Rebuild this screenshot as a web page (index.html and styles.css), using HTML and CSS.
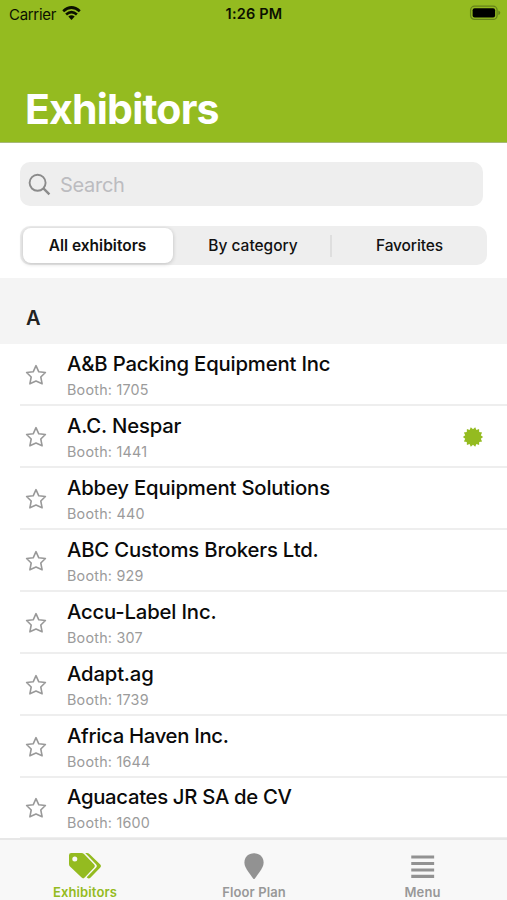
FILE: index.html
```html
<!DOCTYPE html>
<html lang="en">
<head>
<meta charset="utf-8">
<title>Exhibitors</title>
<link rel="stylesheet" href="styles.css">
</head>
<body>
<svg class="defs" width="0" height="0" aria-hidden="true">
  <symbol id="star" viewBox="0 0 22 22"><path d="M11 1.7 13.8 7.8 20.4 8.5 15.8 13 17.1 19.8 11 17.1 4.9 19.8 6.2 13 1.6 8.5 8.2 7.8Z" fill="none" stroke="#999" stroke-width="1.6" stroke-linejoin="round"/></symbol>
</svg>
<div class="app">
  <header class="header">
    <div class="status">
      <div class="carrier"><span>Carrier</span>
        <svg width="19" height="15" viewBox="0 0 19 15"><g fill="none" stroke="#0b1000" stroke-width="2.7"><path d="M1.2 5.2Q9.5-2.2 17.8 5.2"/><path d="M4.1 8.4Q9.5 3.7 14.9 8.4"/></g><path d="M6.3 10.5Q9.5 7.9 12.7 10.5L9.5 14Z" fill="#0b1000"/></svg>
      </div>
      <div class="time">1:26 PM</div>
      <svg class="battery" width="32" height="16" viewBox="0 0 32 16"><rect x="1.6" y="1.2" width="26.5" height="13.2" rx="4" fill="none" stroke="#65821a" stroke-width="1.3"/><rect x="3.6" y="3.2" width="22.5" height="9.2" rx="2" fill="#000"/><path d="M29.3 5.5Q31.3 6.2 31.3 7.8T29.3 10.1Z" fill="#65821a"/></svg>
    </div>
    <h1>Exhibitors</h1>
  </header>
  <section class="controls">
    <div class="search">
      <svg width="24" height="24" viewBox="0 0 24 24" fill="none" stroke="#8b8b8b"><circle cx="9.6" cy="9.8" r="8" stroke-width="1.9"/><path d="m15.4 15.4 6 6" stroke-width="2.4"/></svg>
      <span>Search</span>
    </div>
    <div class="segments">
      <div class="segment active">All exhibitors</div>
      <div class="segment category">By category</div>
      <div class="segment favorites">Favorites</div>
    </div>
  </section>
  <h2>A</h2>
  <main class="list">
    <div class="row"><svg class="star"><use href="#star"/></svg><div class="entry"><div class="name">A&amp;B Packing Equipment Inc</div><div class="booth">Booth: 1705</div></div></div>
    <div class="row"><svg class="star"><use href="#star"/></svg><div class="entry"><div class="name">A.C. Nespar</div><div class="booth">Booth: 1441</div></div>
      <svg class="seal" width="22" height="22" viewBox="-11 -11 22 22" fill="#94bb20"><path d="M0-7.8 2.2-9.8 3.4-7 6.1-8 6.2-4.9 9.1-4.4 7.8-1.7 10.1 0 7.8 1.7 9.1 4.4 6.2 4.9 6.1 8 3.4 7 2.2 9.8 0 7.8-2.2 9.8-3.4 7-6.1 8-6.2 4.9-9.1 4.4-7.8 1.7-10.1 0-7.8-1.7-9.1-4.4-6.2-4.9-6.1-8-3.4-7-2.2-9.8Z"/></svg>
    </div>
    <div class="row"><svg class="star"><use href="#star"/></svg><div class="entry"><div class="name">Abbey Equipment Solutions</div><div class="booth">Booth: 440</div></div></div>
    <div class="row"><svg class="star"><use href="#star"/></svg><div class="entry"><div class="name">ABC Customs Brokers Ltd.</div><div class="booth">Booth: 929</div></div></div>
    <div class="row"><svg class="star"><use href="#star"/></svg><div class="entry"><div class="name">Accu-Label Inc.</div><div class="booth">Booth: 307</div></div></div>
    <div class="row"><svg class="star"><use href="#star"/></svg><div class="entry"><div class="name">Adapt.ag</div><div class="booth">Booth: 1739</div></div></div>
    <div class="row"><svg class="star"><use href="#star"/></svg><div class="entry"><div class="name tight">Africa Haven Inc.</div><div class="booth">Booth: 1644</div></div></div>
    <div class="row"><svg class="star"><use href="#star"/></svg><div class="entry"><div class="name tight">Aguacates JR SA de CV</div><div class="booth">Booth: 1600</div></div></div>
  </main>
  <nav class="tabs">
    <div class="tab selected">
      <svg width="34" height="28" viewBox="0 0 34 28"><path fill="#94bb20" fill-rule="evenodd" d="M3.2 1H13.5Q15 1 16 2L26.2 12.4Q27.7 14 26.2 15.5L16.7 25.6Q15.2 27.2 13.6 25.6L2 14.5Q1 13.5 1 12V3.2Q1 1 3.2 1ZM6.8 4.5A2.5 2.5 0 1 0 6.8 9.5A2.5 2.5 0 1 0 6.8 4.5Z"/><path fill="#94bb20" d="M17.2 1H19Q20.4 1 21.4 2L32.3 12.5Q33.8 14 32.3 15.5L22.4 25.7Q20.8 27.3 19.2 25.8L18.7 25.2 28.2 15.5Q29.7 14 28.2 12.4Z"/></svg>
      <span>Exhibitors</span>
    </div>
    <div class="tab">
      <svg width="20" height="28" viewBox="0 0 20 28"><path fill="#929292" d="M10 1.3C4.4 1.3.4 5.2.4 10.5c0 3.3 1.6 6 3.7 9l5 6.9q.9 1.2 1.8 0l5-6.9c2.1-3 3.7-5.7 3.7-9C19.6 5.2 15.6 1.3 10 1.3Z"/></svg>
      <span>Floor Plan</span>
    </div>
    <div class="tab">
      <svg width="24" height="28" viewBox="0 0 24 28"><path d="M1.8 5H21.6M1.8 11.5H21.6M1.8 18H21.6M1.8 24.4H21.6" stroke="#929292" stroke-width="3.1" stroke-linecap="square"/></svg>
      <span>Menu</span>
    </div>
  </nav>
</div>
</body>
</html>
```

FILE: styles.css
```css
* { box-sizing: border-box; }
body { margin: 0; background: #fff; color: #111; font-family: Inter, "Liberation Sans", sans-serif; }
svg { display: block; flex: none; }
.defs { position: absolute; }
.app { width: 507px; height: 900px; overflow: hidden; display: flex; flex-direction: column; }
.header { flex: none; height: 143px; background: #94bb20; border-bottom: 1px solid #a7b878; }
.status { height: 28px; padding: 0 6px 0 9px; display: grid; grid-template-columns: 1fr auto 1fr; align-items: center; color: #0b1000; font-size: 15px; }
.carrier { display: flex; align-items: center; gap: 6px; }
.carrier span { letter-spacing: -.3px; }
.carrier svg { margin-top: -2px; }
.time { font-weight: 600; font-size: 14.5px; letter-spacing: .2px; margin: -1px 2px 0 0; }
.battery { justify-self: end; margin-top: -2px; }
h1 { margin: 54px 0 0 25px; font-size: 41px; line-height: 54px; font-weight: 700; letter-spacing: -.8px; color: #fff; }
.controls { flex: none; height: 135px; padding: 19px 20px 0; }
.search { width: 463px; height: 44px; border-radius: 10px; background: #eee; display: flex; align-items: center; padding: 1px 0 0 8px; gap: 8px; font-size: 20px; letter-spacing: -.3px; color: #bcbcc0; }
.search span { margin-top: 1px; }
.segments { margin-top: 20px; width: 467px; height: 39px; border-radius: 10px; background: #eee; display: grid; grid-template-columns: 154px 158px 155px; align-items: center; font-size: 15.5px; font-weight: 500; text-align: center; }
.segment { height: 35px; line-height: 35px; }
.active { margin: 0 1px 0 3px; padding-right: 1px; border-radius: 8px; background: #fff; font-weight: 600; box-shadow: 0 1px 4px #0003; }
.category { background: linear-gradient(#dedede, #dedede) right center / 2px 22px no-repeat; }
.favorites { letter-spacing: -.1px; }
h2 { flex: none; margin: 0; height: 66.3px; padding: 14px 26px 0; background: #f4f4f4; font-size: 20px; line-height: 53px; font-weight: 600; color: #222; }
.list { flex: 1; min-height: 0; overflow: hidden; }
.row { height: 61.9px; margin-left: 20px; padding: 0 23px 0 5px; border-bottom: 2px solid #eee; display: flex; align-items: center; }
.star { width: 22px; height: 22px; margin-top: 2px; }
.seal { margin-top: 2px; }
.entry { flex: 1; margin-left: 20px; padding-top: 3px; }
.name { font-size: 20.3px; line-height: 28px; font-weight: 500; letter-spacing: -.17px; white-space: nowrap; color: #0a0a0a; }
.tight { letter-spacing: -.3px; }
.booth { font-size: 14.3px; line-height: 23px; letter-spacing: .24px; color: #9b9b9b; }
.tabs { flex: none; height: 62px; background: #f8f8f8; border-top: 2px solid #e7e7e7; display: grid; grid-template-columns: 170px 168px 169px; }
.tab { padding-top: 12px; display: flex; flex-direction: column; align-items: center; font-size: 13px; line-height: 24px; font-weight: 600; letter-spacing: .1px; color: #989898; }
.selected { color: #94bb20; }
```
